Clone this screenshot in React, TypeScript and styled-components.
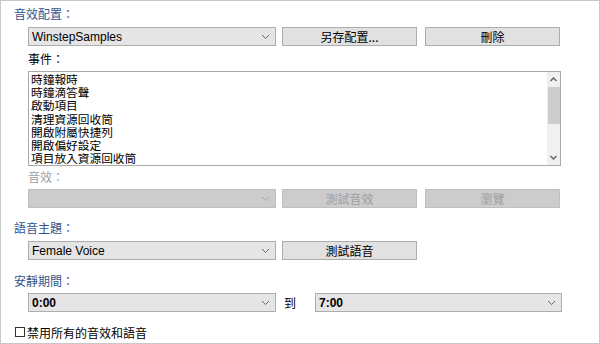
import React from 'react';
import styled, {createGlobalStyle} from 'styled-components';

const GlobalStyle = createGlobalStyle`
  html, body {
    margin: 0;
    padding: 0;
    background: #fff;
  }
  body {
    font-family: "Noto Sans CJK TC", "Liberation Sans", sans-serif;
    font-size: 12px;
    color: #000;
  }
`;

const cjk = `"Noto Sans CJK TC", "Liberation Sans", sans-serif`;
const latin = `"Liberation Sans", "Noto Sans CJK TC", sans-serif`;

const Page = styled.div`
  width: 600px;
  height: 344px;
  box-sizing: border-box;
  border: 1px solid #c8c8c8;
  padding: 3px 0 0 13px;
  display: flex;
  flex-direction: column;
`;

const Heading = styled.div<{ top: number }>`
  margin-top: ${p => p.top}px;
  height: 20px;
  line-height: 20px;
  font-family: ${cjk};
  font-size: 12px;
  color: #33548a;
`;

const Label = styled.div<{ top: number, disabled?: boolean }>`
  margin-top: ${p => p.top}px;
  margin-left: 14px;
  height: 20px;
  line-height: 20px;
  font-family: ${cjk};
  font-size: 12px;
  color: ${p => p.disabled ? '#a0a0a0' : '#000'};
`;

const Row = styled.div<{ top: number }>`
  margin-top: ${p => p.top}px;
  margin-left: 14px;
  height: 19px;
  display: flex;
  align-items: center;
`;

const SelectBox = styled.div<{ width: number, disabled?: boolean }>`
  width: ${p => p.width}px;
  height: 19px;
  box-sizing: border-box;
  border: 1px solid ${p => p.disabled ? '#bfbfbf' : '#adadad'};
  background: ${p => p.disabled ? '#cccccc' : '#e5e5e5'};
  display: flex;
  align-items: center;
  padding: 0 4px 0 3px;
  flex-shrink: 0;
`;

const SelectText = styled.span<{ bold?: boolean }>`
  flex: 1;
  font-family: ${latin};
  font-size: 12px;
  font-weight: ${p => p.bold ? 700 : 400};
  color: #000;
  white-space: nowrap;
`;

const Chevron = styled.svg`
  width: 9px;
  height: 6px;
  margin-right: 1px;
`;

const Button = styled.div<{ width: number, gap: number, disabled?: boolean }>`
  width: ${p => p.width}px;
  height: 19px;
  margin-left: ${p => p.gap}px;
  box-sizing: border-box;
  border: 1px solid ${p => p.disabled ? '#bfbfbf' : '#adadad'};
  background: ${p => p.disabled ? '#cccccc' : '#e1e1e1'};
  color: ${p => p.disabled ? '#a0a0a0' : '#000'};
  font-family: ${cjk};
  font-size: 12px;
  line-height: 17px;
  text-align: center;
  flex-shrink: 0;
`;

const ListBox = styled.div`
  margin-top: 2px;
  margin-left: 14px;
  width: 533px;
  height: 95px;
  box-sizing: border-box;
  border: 1px solid #aaaaaa;
  background: #fff;
  display: flex;
`;

const ListItems = styled.div`
  flex: 1;
  padding: 1px 0 0 2px;
  font-family: "Liberation Sans", "Noto Sans CJK TC", sans-serif;
  font-size: 11.7px;
  line-height: 13.2px;
  color: #000;
`;

const ScrollBar = styled.div`
  width: 13px;
  background: #f0f0f0;
  display: flex;
  flex-direction: column;
  align-items: center;
`;

const ScrollArrow = styled.svg`
  width: 7px;
  height: 5px;
  margin: 5px 0;
`;

const Thumb = styled.div`
  width: 12px;
  height: 37px;
  background: #cdcdcd;
`;

const Spacer = styled.div`
  flex: 1;
`;

const ToLabel = styled.span`
  width: 39px;
  padding-left: 8px;
  box-sizing: border-box;
  font-family: ${cjk};
  font-size: 12px;
  color: #000;
  flex-shrink: 0;
`;

const CheckRow = styled.label`
  margin-top: 10px;
  height: 20px;
  display: flex;
  align-items: center;
  font-family: ${cjk};
  font-size: 12px;
  color: #000;
`;

const CheckBox = styled.span`
  width: 10px;
  height: 10px;
  box-sizing: border-box;
  border: 1px solid #333;
  background: #fff;
  margin: 0 2px 0 1px;
`;

function Select({width, text, bold, disabled}: { width: number, text?: string, bold?: boolean, disabled?: boolean }) {
  return (
    <SelectBox width={width} disabled={disabled}>
      <SelectText bold={bold}>{text}</SelectText>
      <Chevron viewBox="0 0 9 6">
        <polyline points="1,1 4.5,4.5 8,1" fill="none" stroke={disabled ? '#aaa' : '#666'} strokeWidth="1"/>
      </Chevron>
    </SelectBox>
  );
}

const events = [
  '時鐘報時',
  '時鐘滴答聲',
  '啟動項目',
  '清理資源回收筒',
  '開啟附屬快捷列',
  '開啟偏好設定',
  '項目放入資源回收筒',
];

export default function App() {
  return (
    <>
      <GlobalStyle/>
      <Page>
        <Heading top={0}>音效配置：</Heading>
        <Row top={3}>
          <Select width={248} text="WinstepSamples"/>
          <Button width={135} gap={6}>另存配置...</Button>
          <Button width={135} gap={8}>刪除</Button>
        </Row>
        <Label top={3}>事件：</Label>
        <ListBox>
          <ListItems>
            {events.map(e => <div key={e}>{e}</div>)}
          </ListItems>
          <ScrollBar>
            <ScrollArrow viewBox="0 0 7 5">
              <polyline points="0.5,4 3.5,1 6.5,4" fill="none" stroke="#606060" strokeWidth="1.4"/>
            </ScrollArrow>
            <Thumb/>
            <Spacer/>
            <ScrollArrow viewBox="0 0 7 5">
              <polyline points="0.5,1 3.5,4 6.5,1" fill="none" stroke="#606060" strokeWidth="1.4"/>
            </ScrollArrow>
          </ScrollBar>
        </ListBox>
        <Label top={1} disabled>音效：</Label>
        <Row top={2}>
          <Select width={248} disabled/>
          <Button width={135} gap={6} disabled>測試音效</Button>
          <Button width={135} gap={8} disabled>瀏覽</Button>
        </Row>
        <Heading top={10}>語音主題：</Heading>
        <Row top={3}>
          <Select width={248} text="Female Voice"/>
          <Button width={135} gap={6}>測試語音</Button>
        </Row>
        <Heading top={11}>安靜期間：</Heading>
        <Row top={2}>
          <Select width={248} text="0:00" bold/>
          <ToLabel>到</ToLabel>
          <Select width={247} text="7:00" bold/>
        </Row>
        <CheckRow>
          <CheckBox/>
          禁用所有的音效和語音
        </CheckRow>
      </Page>
    </>
  );
}
